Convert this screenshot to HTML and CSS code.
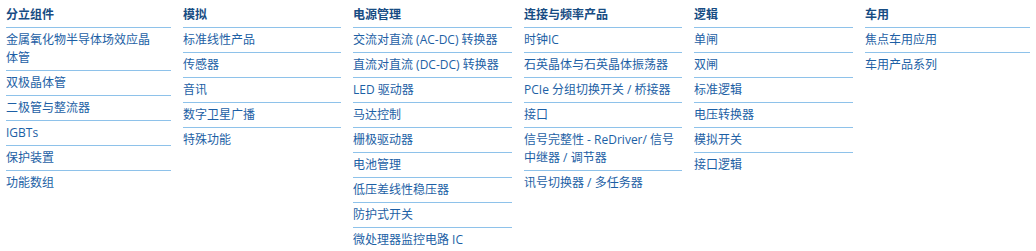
FILE: index.html
```html
<!DOCTYPE html>
<html lang="zh-CN">
  <head>
    <meta charset="utf-8">
    <title>产品</title>
    <link rel="stylesheet" href="styles.css">
  </head>
<body>
  <div class="menu">

    <!--每一列是一个产品类别-->
    <div class="col narrow">
      <div class="head">分立组件</div>
      <ul>
        <li><a href="#">金属氧化物半导体场效应晶体管</a></li>
        <li><a href="#">双极晶体管</a></li>
        <li><a href="#">二极管与整流器</a></li>
        <li><a href="#">IGBTs</a></li>
        <li><a href="#">保护装置</a></li>
        <li><a href="#">功能数组</a></li>
      </ul>
    </div>

    <div class="col">
      <div class="head">模拟</div>
      <ul>
        <li><a href="#">标准线性产品</a></li>
        <li><a href="#">传感器</a></li>
        <li><a href="#">音讯</a></li>
        <li><a href="#">数字卫星广播</a></li>
        <li><a href="#">特殊功能</a></li>
      </ul>
    </div>

    <div class="col">
      <div class="head">电源管理</div>
      <ul>
        <li><a href="#">交流对直流 (AC-DC) 转换器</a></li>
        <li><a href="#">直流对直流 (DC-DC) 转换器</a></li>
        <li><a href="#">LED 驱动器</a></li>
        <li><a href="#">马达控制</a></li>
        <li><a href="#">栅极驱动器</a></li>
        <li><a href="#">电池管理</a></li>
        <li><a href="#">低压差线性稳压器</a></li>
        <li><a href="#">防护式开关</a></li>
        <li><a href="#">微处理器监控电路 IC</a></li>
      </ul>
    </div>

    <div class="col">
      <div class="head">连接与频率产品</div>
      <ul>
        <li><a href="#">时钟IC</a></li>
        <li><a href="#">石英晶体与石英晶体振荡器</a></li>
        <li><a href="#">PCIe 分组切换开关 / 桥接器</a></li>
        <li><a href="#">接口</a></li>
        <li><a href="#">信号完整性 - ReDriver/ 信号中继器 / 调节器</a></li>
        <li><a href="#">讯号切换器 / 多任务器</a></li>
      </ul>
    </div>

    <div class="col">
      <div class="head">逻辑</div>
      <ul>
        <li><a href="#">单闸</a></li>
        <li><a href="#">双闸</a></li>
        <li><a href="#">标准逻辑</a></li>
        <li><a href="#">电压转换器</a></li>
        <li><a href="#">模拟开关</a></li>
        <li><a href="#">接口逻辑</a></li>
      </ul>
    </div>

    <div class="col">
      <div class="head">车用</div>
      <ul>
        <li><a href="#">焦点车用应用</a></li>
        <li><a href="#">车用产品系列</a></li>
      </ul>
    </div>

  </div>
</body>
</html>
```

FILE: styles.css
```css
* {
  box-sizing: border-box;
}
body {
  margin: 0;
  background: #fff;
  font: 12px "Open Sans", "Noto Sans CJK SC", sans-serif;
}
.menu {
  display: grid;
  grid-template-columns: 165px 158px 159px 158px 159px 165px;
  column-gap: 12px;
  padding: 0 6px;
}
.head {
  font-weight: bold;
  color: #174c83;
  line-height: 18px;
  padding: 6px 0 3px;
  border-bottom: 1px solid #8ec2ea;
}
ul {
  list-style: none;
  margin: 0;
  padding: 0;
}
li {
  line-height: 18px;
  padding: 3px 0;
  border-bottom: 1px solid #8ec2ea;
}
li:last-child {
  border-bottom: none;
}
.narrow li {
  padding-right: 10px;
}
a {
  color: #1d5fa5;
  text-decoration: none;
}
```
